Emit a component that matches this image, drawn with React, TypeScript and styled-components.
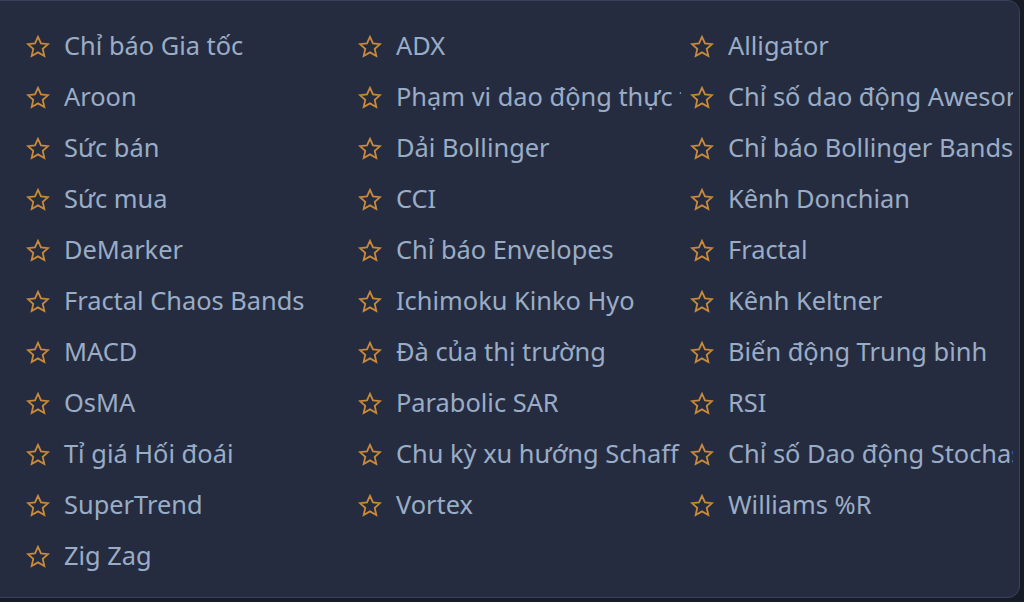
import React from "react";
import styled, { createGlobalStyle } from "styled-components";

const GlobalStyle = createGlobalStyle`
  html, body {
    margin: 0;
    padding: 0;
    background: #161b28;
    overflow: hidden;
  }
  #root {
    width: 1024px;
    height: 602px;
  }
`;

const indicators: string[] = [
  "Chỉ báo Gia tốc",
  "ADX",
  "Alligator",
  "Aroon",
  "Phạm vi dao động thực tế",
  "Chỉ số dao động Awesome",
  "Sức bán",
  "Dải Bollinger",
  "Chỉ báo Bollinger Bands",
  "Sức mua",
  "CCI",
  "Kênh Donchian",
  "DeMarker",
  "Chỉ báo Envelopes",
  "Fractal",
  "Fractal Chaos Bands",
  "Ichimoku Kinko Hyo",
  "Kênh Keltner",
  "MACD",
  "Đà của thị trường",
  "Biến động Trung bình",
  "OsMA",
  "Parabolic SAR",
  "RSI",
  "Tỉ giá Hối đoái",
  "Chu kỳ xu hướng Schaff",
  "Chỉ số Dao động Stochastic",
  "SuperTrend",
  "Vortex",
  "Williams %R",
  "Zig Zag",
];

const Screen = styled.div`
  width: 1024px;
  height: 602px;
  overflow: hidden;
  background: #161b28;
`;

const Panel = styled.div`
  margin-left: -14px;
  width: 1034px;
  height: 598px;
  box-sizing: border-box;
  background: #262c40;
  border: 1px solid #39425a;
  border-radius: 12px;
  padding: 20px 0 16px 30px;
`;

const Grid = styled.div`
  display: grid;
  grid-template-columns: repeat(3, 332px);
  grid-auto-rows: 51px;
`;

const Item = styled.div`
  display: flex;
  align-items: center;
  gap: 14px;
  padding-left: 9px;
  overflow: hidden;
  white-space: nowrap;
  cursor: pointer;
`;

const Label = styled.span`
  font-family: "Noto Sans", "Open Sans", sans-serif;
  font-size: 25.4px;
  color: #9aadc6;
  line-height: 1;
  margin-top: -2px;
`;

const StarIcon = () => (
  <svg width="24" height="24" viewBox="0 0 24 24" style={{ flex: "none" }}>
    <path
      d="M12 1.8l3 6.55 7.1.75-5.35 4.8 1.55 7.05L12 17.35l-6.3 3.6 1.55-7.05L1.9 9.1l7.1-.75z"
      fill="none"
      stroke="#c98a3a"
      strokeWidth="1.8"
      strokeLinejoin="miter"
    />
  </svg>
);

export default function App() {
  return (
    <Screen>
      <GlobalStyle />
      <Panel>
        <Grid>
          {indicators.map((name) => (
            <Item key={name}>
              <StarIcon />
              <Label>{name}</Label>
            </Item>
          ))}
        </Grid>
      </Panel>
    </Screen>
  );
}
